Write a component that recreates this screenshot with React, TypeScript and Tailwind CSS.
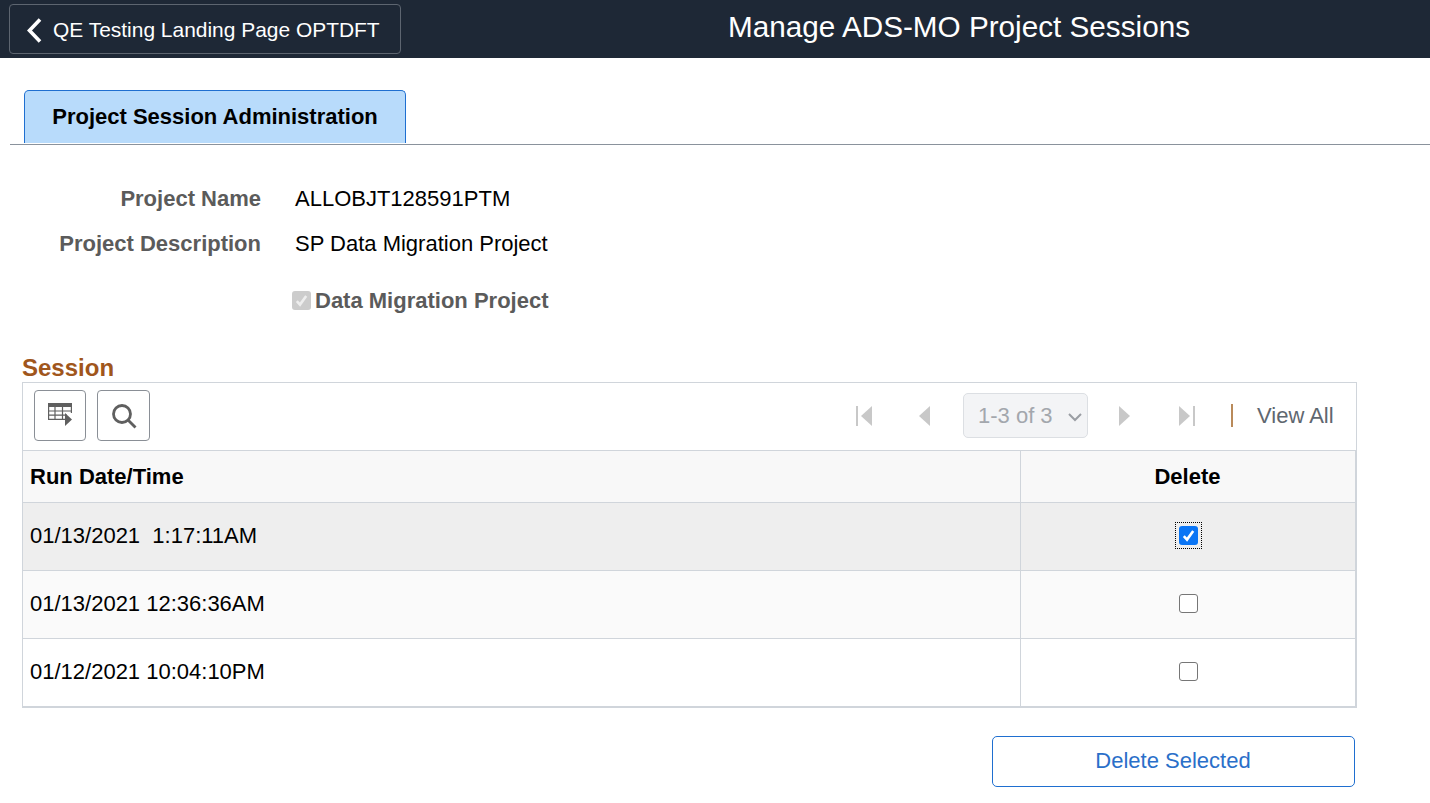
import React from "react";

const F = "font-['Liberation_Sans',Arial,sans-serif]";

function Check({ color }: { color: string }) {
  return (
    <svg width="15" height="15" viewBox="0 0 15 15" fill="none">
      <path d="M2.8 8.2 L6 11.6 L12.2 3" stroke={color} strokeWidth="2.6" />
    </svg>
  );
}

function Row({ text, checked, bg, last }: { text: string; checked?: boolean; bg: string; last?: boolean }) {
  return (
    <div className={`flex border-r border-b ${last ? "h-[69px] border-b-2 border-[#d0d5db]" : "h-[68px] border-[#d0d5db]"} ${bg}`}>
      <div className="flex w-[997px] items-center whitespace-pre pl-[7px] pb-[2px] text-[22px] text-black">{text}</div>
      <div className="flex flex-1 items-center justify-center border-l border-[#d0d5db] pb-[2px]">
        {checked ? (
          <div className="flex h-[27px] w-[27px] items-center justify-center border border-dotted border-black">
            <div className="flex h-[19px] w-[19px] items-center justify-center rounded-[3px] bg-[#0a75f5]">
              <Check color="#fff" />
            </div>
          </div>
        ) : (
          <div className="h-[19px] w-[19px] rounded-[3px] border border-[#767676] bg-white" />
        )}
      </div>
    </div>
  );
}

function Nav({ dir, end }: { dir: "l" | "r"; end?: boolean }) {
  return (
    <svg width="18" height="22" viewBox="0 0 18 22" fill="#c8c8c8">
      {dir === "l" ? (
        <>
          {end && <rect x="0" y="1" width="2" height="20" />}
          <path d="M16 1 V21 L5 11 Z" />
        </>
      ) : (
        <>
          <path d="M2 1 V21 L13 11 Z" />
          {end && <rect x="16" y="1" width="2" height="20" />}
        </>
      )}
    </svg>
  );
}

export default function App() {
  return (
    <div className={`${F} h-[803px] w-[1430px] overflow-hidden bg-white`}>
      <header className="relative flex h-[58px] items-center bg-[#1e2836] pl-[9px]">
        <button className="flex h-[50px] w-[392px] items-center rounded-[4px] border border-[#5d6570] pt-[2px] pl-[15px] text-[20.95px] text-white">
          <svg width="18" height="28" viewBox="0 0 18 28" fill="none" className="mr-[10px]">
            <path d="M15 3.5 L4.5 14.5 L15 25.5" stroke="#fff" strokeWidth="3.6" />
          </svg>
          QE Testing Landing Page OPTDFT
        </button>
        <h1 className="absolute left-[728px] top-[9px] text-[29.7px] font-normal leading-[36px] text-white">
          Manage ADS-MO Project Sessions
        </h1>
      </header>

      <div className="ml-[10px] mt-[32px] h-[55px] border-b border-[#8a929c] pl-[14px]">
        <div className="flex h-[53px] w-[382px] items-center justify-center rounded-t-[5px] border border-b-0 border-[#1f6fd0] bg-[#b8dbfb] pb-[2px] text-[22px] font-bold text-black">
          Project Session Administration
        </div>
      </div>

      <div className="mt-[32px] flex h-[45px] items-start text-[22px] leading-[44px]">
        <div className="w-[261px] text-right font-bold text-[#5b5b5b]">Project Name</div>
        <div className="ml-[34px] text-black">ALLOBJT128591PTM</div>
      </div>
      <div className="flex h-[45px] items-start text-[22px] leading-[44px]">
        <div className="w-[261px] text-right font-bold text-[#5b5b5b]">Project Description</div>
        <div className="ml-[34px] text-black">SP Data Migration Project</div>
      </div>
      <div className="ml-[292px] mt-[21px] flex h-[24px] items-center">
        <div className="flex h-[19px] w-[19px] items-center justify-center rounded-[3px] bg-[#cccccc]">
          <Check color="#eeeeee" />
        </div>
        <span className="ml-[4px] text-[22px] font-bold text-[#5b5b5b]">Data Migration Project</span>
      </div>

      <div className="ml-[22px] mt-[43px] h-[27px] text-[24px] font-bold leading-[26px] text-[#a0561c]">Session</div>

      <div className="ml-[22px] w-[1335px] border-x border-t border-[#d0d5db]">
        <div className="flex h-[68px] items-center border-b border-[#d0d5db] bg-white pb-[2px] pl-[11px]">
          <button className="flex h-[51px] w-[52px] items-center justify-center rounded-[4px] border border-[#8a8f96] bg-white">
            <svg width="26" height="26" viewBox="0 0 26 26" className="mt-[-3px]">
              <rect x="1" y="2" width="24" height="4" fill="#5f5f5f" />
              <g fill="none" stroke="#5f5f5f" strokeWidth="1.2">
                <path d="M1.6 6 V18.4 H18 M1.6 10 H24.4 M1.6 14.2 H20 M8 6 V18.4 M15.5 6 V18.4 M24.4 6 V12" />
              </g>
              <path d="M18 12 L25 18.5 L18 25 Z" fill="#5f5f5f" />
            </svg>
          </button>
          <button className="ml-[11px] flex h-[51px] w-[53px] items-center justify-center rounded-[4px] border border-[#8a8f96] bg-white">
            <svg width="26" height="26" viewBox="0 0 26 26" fill="none" stroke="#5f5f5f" strokeWidth="2.8">
              <circle cx="11" cy="11" r="8.5" />
              <path d="M17 17 L24.5 24.5" />
            </svg>
          </button>
          <div className="ml-[706px] flex items-center">
            <Nav dir="l" end />
            <div className="ml-[40px]"><Nav dir="l" /></div>
            <div className="ml-[31px] flex h-[45px] w-[125px] items-center rounded-[5px] border border-[#dcdfe3] bg-[#f3f4f6] pl-[14px] text-[22px] text-[#a3a7ad]">
              1-3 of 3
              <svg width="16" height="10" viewBox="0 0 16 10" fill="none" className="ml-[14px] mt-[2px]" stroke="#9a9ea4" strokeWidth="2">
                <path d="M2 2 L8 8 L14 2" />
              </svg>
            </div>
            <div className="ml-[29px]"><Nav dir="r" /></div>
            <div className="ml-[42px]"><Nav dir="r" end /></div>
            <div className="ml-[36px] h-[23px] w-[2px] bg-[#b98a5a]" />
            <span className="ml-[24px] text-[22px] text-[#5f6770]">View All</span>
          </div>
        </div>
        <div className="flex h-[52px] border-r border-b border-[#d0d5db] bg-[#f8f8f8] text-[22px] font-bold text-black">
          <div className="flex w-[997px] items-center pl-[7px]">Run Date/Time</div>
          <div className="flex flex-1 items-center justify-center border-l border-[#d0d5db] pr-[1px]">Delete</div>
        </div>
        <Row text="01/13/2021  1:17:11AM" checked bg="bg-[#eeeeee]" />
        <Row text="01/13/2021 12:36:36AM" bg="bg-[#fafafa]" />
        <Row text="01/12/2021 10:04:10PM" bg="bg-white" last />
      </div>

      <div className="ml-[992px] mt-[28px]">
        <button className="h-[51px] w-[363px] rounded-[5px] border border-[#1f6fd0] bg-white pr-[1px] pb-[2px] text-[22px] text-[#2a6fc9]">
          Delete Selected
        </button>
      </div>
    </div>
  );
}
